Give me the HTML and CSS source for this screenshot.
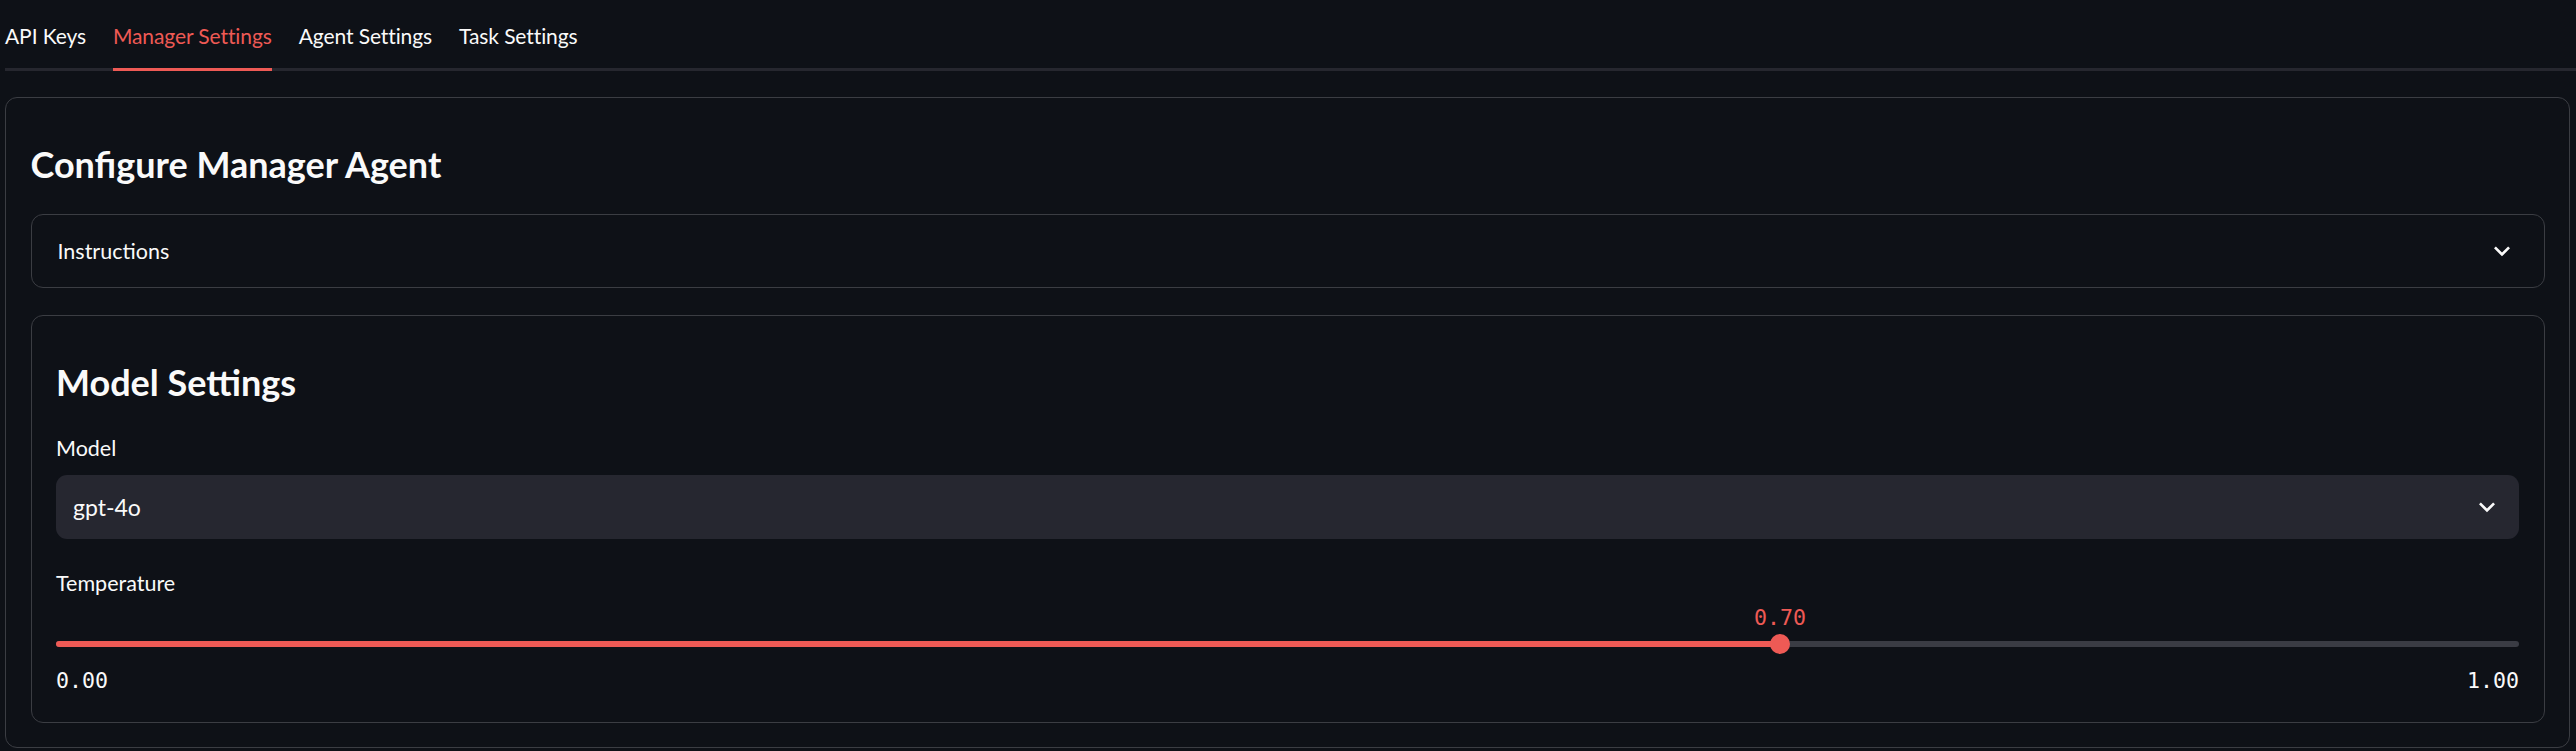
FILE: index.html
```html
<!DOCTYPE html>
<html lang="en">
<head>
<meta charset="utf-8">
<title>Manager Settings</title>
<link rel="stylesheet" href="styles.css">
</head>
<body>
<div class="page">
  <div class="tabs">
    <div class="tab">API Keys</div>
    <div class="tab tab-active">Manager Settings</div>
    <div class="tab">Agent Settings</div>
    <div class="tab">Task Settings</div>
  </div>
  <div class="panel">
    <h3 class="heading">Configure Manager Agent</h3>
    <div class="expander">
      <span class="expander-title">Instructions</span>
      <svg class="chev" width="32" height="32" viewBox="0 0 24 24"><path d="M16.59 8.59L12 13.17 7.41 8.59 6 10l6 6 6-6z" fill="#fafafa"/></svg>
    </div>
    <div class="card">
      <h3 class="heading">Model Settings</h3>
      <div class="label">Model</div>
      <div class="select">
        <span class="select-value">gpt-4o</span>
        <svg class="chev" width="32" height="32" viewBox="0 0 24 24"><path d="M16.59 8.59L12 13.17 7.41 8.59 6 10l6 6 6-6z" fill="#fafafa"/></svg>
      </div>
      <div class="label">Temperature</div>
      <div class="slider">
        <div class="slider-rail">
          <div class="slider-fill" style="width:70%"></div>
          <div class="slider-thumb" style="left:70%"><span class="slider-value">0.70</span></div>
        </div>
        <div class="slider-ticks"><span>0.00</span><span>1.00</span></div>
      </div>
    </div>
  </div>
</div>
</body>
</html>
```

FILE: styles.css
```css
html, body {
  margin: 0;
  padding: 0;
  background: #0e1117;
}
body {
  width: 2576px;
  height: 751px;
  overflow: hidden;
  font-family: "Lato", "Source Sans Pro", sans-serif;
  color: #fafafa;
}
.page {
  padding: 0 6px 0 5px;
}
.tabs {
  display: flex;
  gap: 27px;
  height: 71px;
  margin-right: -6px;
  box-shadow: inset 0 -3px 0 #26272f;
}
.tab {
  box-sizing: border-box;
  height: 71px;
  padding-top: 22.5px;
  font-size: 21px;
  line-height: 26px;
  letter-spacing: -0.1px;
  border-bottom: 3px solid transparent;
  white-space: nowrap;
}
.tab-active {
  color: #ee5a55;
  border-bottom-color: #ee5a55;
}
.panel {
  margin-top: 26px;
  border: 1px solid #3b3d43;
  border-radius: 12px;
  padding: 45px 24.5px 24px 24.5px;
}
.heading {
  margin: 0;
  font-size: 36px;
  line-height: 43.2px;
  font-weight: 700;
}
.expander {
  box-sizing: border-box;
  margin-top: 28px;
  height: 74px;
  border: 1px solid #3b3d43;
  border-radius: 12px;
  display: flex;
  align-items: center;
  justify-content: space-between;
  padding: 0 25.5px 0 26px;
}
.expander-title {
  font-size: 21.5px;
  line-height: 26px;
}
.chev {
  display: block;
  flex: none;
}
.card {
  margin-top: 27px;
  border: 1px solid #3b3d43;
  border-radius: 12px;
  padding: 45px 24.5px 29px 24.5px;
}
.label {
  margin-top: 32px;
  font-size: 21.5px;
  line-height: 25.8px;
}
.select {
  box-sizing: border-box;
  margin-top: 13px;
  height: 64px;
  background: #262730;
  border-radius: 11px;
  display: flex;
  align-items: center;
  justify-content: space-between;
  padding: 0 16px 0 17px;
}
.select-value {
  font-size: 23px;
  line-height: 28px;
}
.slider {
  padding-top: 37px;
}
.slider-rail {
  position: relative;
  height: 20px;
}
.slider-rail::before {
  content: "";
  position: absolute;
  left: 0;
  right: 0;
  top: 7px;
  height: 6px;
  border-radius: 3px;
  background: #3a3c44;
}
.slider-fill {
  position: absolute;
  left: 0;
  top: 7px;
  height: 6px;
  border-radius: 3px;
  background: #ee5a55;
}
.slider-thumb {
  position: absolute;
  top: 0;
  width: 20px;
  height: 20px;
  margin-left: -10px;
  border-radius: 50%;
  background: #ee5a55;
}
.slider-value {
  position: absolute;
  left: 50%;
  bottom: calc(100% + 4px);
  transform: translateX(-50%);
  font-family: "DejaVu Sans Mono", "Liberation Mono", monospace;
  font-size: 21.6px;
  line-height: 25px;
  color: #ee5a55;
  white-space: nowrap;
}
.slider-ticks {
  margin-top: 13.5px;
  display: flex;
  justify-content: space-between;
  font-family: "DejaVu Sans Mono", "Liberation Mono", monospace;
  font-size: 21.6px;
  line-height: 25px;
}
```
